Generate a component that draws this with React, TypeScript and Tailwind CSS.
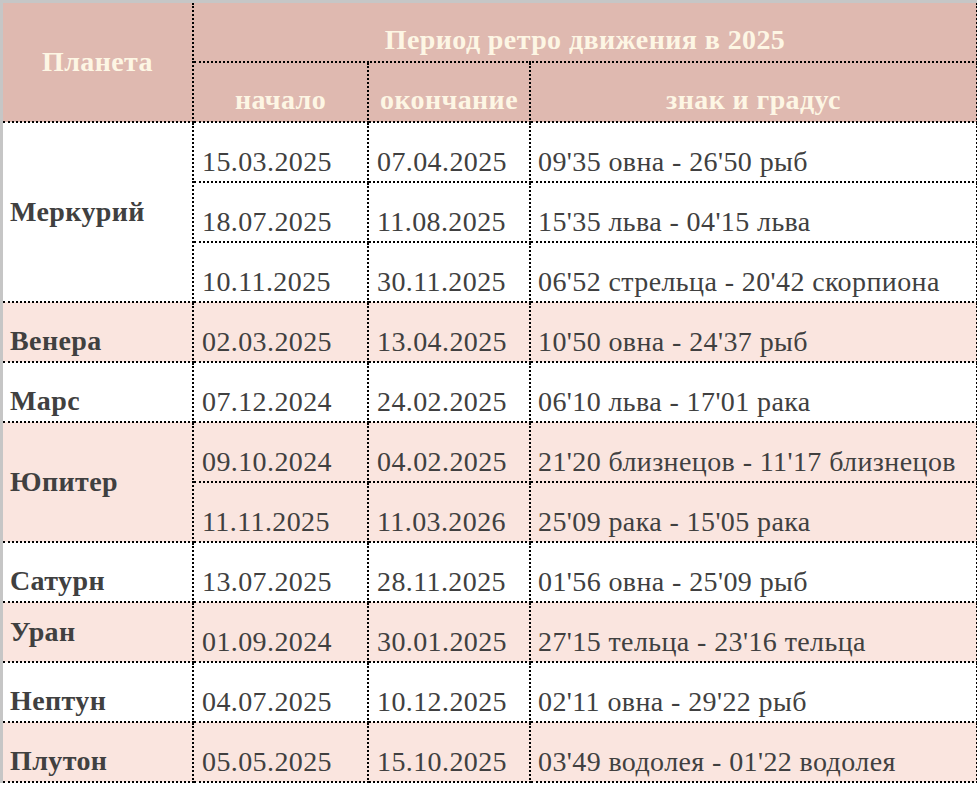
type Period = { start: string; end: string; sign: string };
type Planet = { name: string; pink: boolean; center?: boolean; periods: Period[] };

const planets: Planet[] = [
  {
    name: 'Меркурий',
    pink: false,
    periods: [
      { start: '15.03.2025', end: '07.04.2025', sign: "09'35 овна - 26'50 рыб" },
      { start: '18.07.2025', end: '11.08.2025', sign: "15'35 льва - 04'15 льва" },
      { start: '10.11.2025', end: '30.11.2025', sign: "06'52 стрельца - 20'42 скорпиона" },
    ],
  },
  { name: 'Венера', pink: true, periods: [{ start: '02.03.2025', end: '13.04.2025', sign: "10'50 овна - 24'37 рыб" }] },
  { name: 'Марс', pink: false, periods: [{ start: '07.12.2024', end: '24.02.2025', sign: "06'10 льва - 17'01 рака" }] },
  {
    name: 'Юпитер',
    pink: true,
    periods: [
      { start: '09.10.2024', end: '04.02.2025', sign: "21'20 близнецов - 11'17 близнецов" },
      { start: '11.11.2025', end: '11.03.2026', sign: "25'09 рака - 15'05 рака" },
    ],
  },
  { name: 'Сатурн', pink: false, periods: [{ start: '13.07.2025', end: '28.11.2025', sign: "01'56 овна - 25'09 рыб" }] },
  { name: 'Уран', pink: true, center: true, periods: [{ start: '01.09.2024', end: '30.01.2025', sign: "27'15 тельца - 23'16 тельца" }] },
  { name: 'Нептун', pink: false, periods: [{ start: '04.07.2025', end: '10.12.2025', sign: "02'11 овна - 29'22 рыб" }] },
  { name: 'Плутон', pink: true, periods: [{ start: '05.05.2025', end: '15.10.2025', sign: "03'49 водолея - 01'22 водолея" }] },
];

const cell = 'border-r-2 border-b-2 border-dotted border-black';

export default function App() {
  return (
    <div className="w-[977px] h-[785px] bg-white overflow-hidden font-['Liberation_Serif',serif]">
      <div className="border-l-[3px] border-t-[3px] border-[#c6c6c6]">
        <table className="border-collapse table-fixed w-[974px] text-[28px] tracking-[0.4px] leading-[32px] text-[#404040]">
          <colgroup>
            <col className="w-[190px]" />
            <col className="w-[175px]" />
            <col className="w-[162px]" />
            <col className="w-[447px]" />
          </colgroup>
          <thead className="bg-[#dfb9b0] text-[#fdf6e4] font-bold">
            <tr className="h-[59px]">
              <th rowSpan={2} className={`${cell} align-middle text-center`}>
                Планета
              </th>
              <th colSpan={3} className={`${cell} align-bottom pb-[5px] text-center`}>
                Период ретро движения в 2025
              </th>
            </tr>
            <tr className="h-[60px]">
              <th className={`${cell} align-bottom pb-[5px] text-center`}>начало</th>
              <th className={`${cell} align-bottom pb-[5px] text-center`}>окончание</th>
              <th className={`${cell} align-bottom pb-[5px] text-center`}>знак и градус</th>
            </tr>
          </thead>
          <tbody>
            {planets.map((p) =>
              p.periods.map((per, i) => (
                <tr key={p.name + i} className={`h-[60px] ${p.pink ? 'bg-[#fae5df]' : 'bg-white'}`}>
                  {i === 0 && (
                    <td
                      rowSpan={p.periods.length}
                      className={`${cell} pl-[7px] font-bold ${
                        p.periods.length > 1 || p.center ? 'align-middle' : 'align-bottom pb-[4px]'
                      }`}
                    >
                      {p.name}
                    </td>
                  )}
                  <td className={`${cell} align-bottom pb-[3px] pl-[8px] whitespace-nowrap`}>{per.start}</td>
                  <td className={`${cell} align-bottom pb-[3px] pl-[8px] whitespace-nowrap`}>{per.end}</td>
                  <td className={`${cell} align-bottom pb-[3px] pl-[7px] whitespace-nowrap`}>{per.sign}</td>
                </tr>
              ))
            )}
          </tbody>
        </table>
      </div>
    </div>
  );
}
